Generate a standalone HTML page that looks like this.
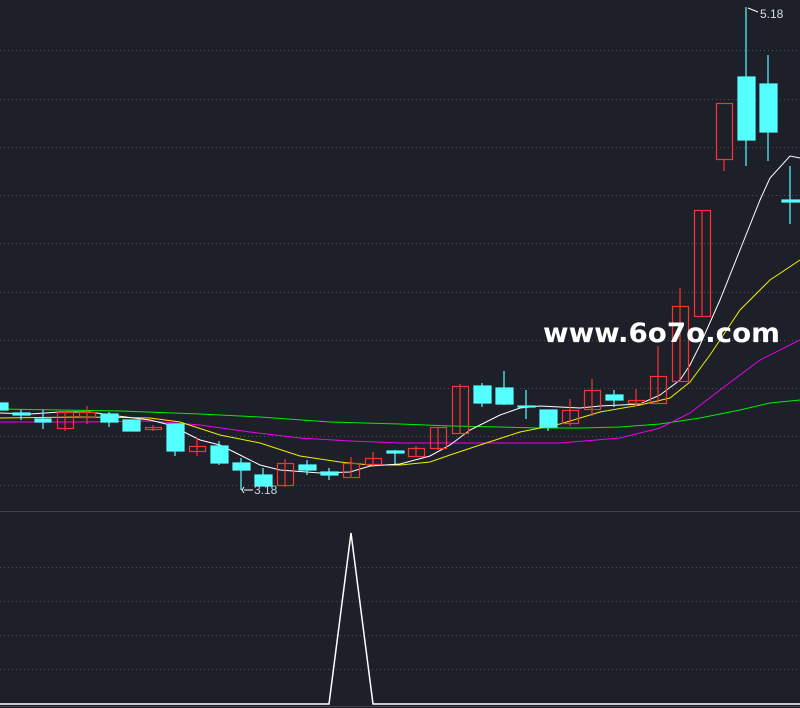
<!DOCTYPE html>
<html><head><meta charset="utf-8"><style>
html,body{margin:0;padding:0;background:#1d2029;}
svg{display:block}
</style></head><body>
<svg width="800" height="708" viewBox="0 0 800 708" xmlns="http://www.w3.org/2000/svg">
<rect width="800" height="708" fill="#1d2029"/>
<g stroke="#4a4e58" stroke-width="1" stroke-dasharray="1 3">
<line x1="0" y1="50.5" x2="800" y2="50.5"/>
<line x1="0" y1="99.5" x2="800" y2="99.5"/>
<line x1="0" y1="147.5" x2="800" y2="147.5"/>
<line x1="0" y1="195.5" x2="800" y2="195.5"/>
<line x1="0" y1="243.5" x2="800" y2="243.5"/>
<line x1="0" y1="292.5" x2="800" y2="292.5"/>
<line x1="0" y1="340.5" x2="800" y2="340.5"/>
<line x1="0" y1="388.5" x2="800" y2="388.5"/>
<line x1="0" y1="436.5" x2="800" y2="436.5"/>
<line x1="0" y1="485.5" x2="800" y2="485.5"/>
<line x1="0" y1="567.5" x2="800" y2="567.5"/>
<line x1="0" y1="601.5" x2="800" y2="601.5"/>
<line x1="0" y1="635.5" x2="800" y2="635.5"/>
<line x1="0" y1="669.5" x2="800" y2="669.5"/>
</g>
<line x1="0" y1="511.5" x2="800" y2="511.5" stroke="#3c404a"/>
<line x1="0" y1="706.5" x2="800" y2="706.5" stroke="#3c404a"/>
<!-- MA lines -->
<g fill="none" stroke-width="1">
<polyline stroke="#00ee00" points="0,409 60,410 120,411 200,414 260,417 330,422 400,424 450,426 500,427 540,428 580,428 620,427 660,424 700,418 740,410 770,403 800,400"/>
<polyline stroke="#ee00ee" points="0,422 80,422 150,421 200,425 250,432 300,438 350,441 400,443 450,443 500,443 560,443 620,438 660,428 690,413 720,390 760,360 800,340"/>
<polyline stroke="#eeee00" points="0,418 80,417 150,418 180,422 220,435 260,443 300,456 340,462 370,465 400,465 430,462 450,455 480,445 520,432 560,424 600,412 640,405 670,398 690,382 710,355 740,310 770,280 800,260"/>
<polyline stroke="#ffffff" points="0,413 30,414 60,412 90,412 110,415 150,420 170,425 200,440 220,445 240,455 260,465 280,470 320,473 350,472 370,466 400,464 430,456 450,445 470,430 500,415 520,408 540,406 560,407 580,408 600,406 640,404 660,395 680,380 690,365 700,345 720,300 740,250 760,200 770,178 790,156 800,158"/>
</g>
<!-- candles -->
<g stroke-width="1.2">
<g fill="#54ffff" stroke="#54ffff">
<rect x="0" y="403" width="8" height="7"/>
<line x1="21" y1="410" x2="21" y2="420"/><rect x="13" y="413" width="17" height="2"/>
<line x1="43" y1="410" x2="43" y2="429"/><rect x="35" y="419" width="16" height="3"/>
<line x1="109" y1="412" x2="109" y2="427"/><rect x="101" y="414" width="17" height="8"/>
<rect x="123" y="420" width="17" height="11"/>
<line x1="175" y1="424" x2="175" y2="456"/><rect x="167" y="424" width="17" height="27"/>
<line x1="219" y1="441" x2="219" y2="465"/><rect x="211" y="446" width="17" height="17"/>
<line x1="241" y1="458" x2="241" y2="490"/><rect x="233" y="463" width="17" height="7"/>
<line x1="263" y1="468" x2="263" y2="486"/><rect x="255" y="475" width="17" height="11"/>
<line x1="307" y1="460" x2="307" y2="475"/><rect x="299" y="465" width="17" height="5"/>
<line x1="329" y1="468" x2="329" y2="480"/><rect x="321" y="472" width="17" height="3"/>
<line x1="395" y1="450" x2="395" y2="464"/><rect x="387" y="451" width="17" height="2"/>
<line x1="482" y1="383" x2="482" y2="407"/><rect x="474" y="386" width="17" height="17"/>
<line x1="504" y1="371" x2="504" y2="405"/><rect x="496" y="388" width="17" height="16"/>
<line x1="526" y1="390" x2="526" y2="419"/><rect x="518" y="406" width="17" height="1"/>
<line x1="548" y1="427" x2="548" y2="431"/><rect x="540" y="410" width="17" height="17"/>
<line x1="614" y1="390" x2="614" y2="407"/><rect x="606" y="395" width="17" height="5"/>
<line x1="746" y1="7" x2="746" y2="166"/><rect x="738" y="77" width="17" height="63"/>
<line x1="768" y1="55" x2="768" y2="161"/><rect x="760" y="84" width="17" height="48"/>
<line x1="790" y1="166" x2="790" y2="224"/><rect x="782" y="200" width="18" height="2"/>
</g>
<g fill="none" stroke="#ff3232">
<line x1="65" y1="411" x2="65" y2="431"/><rect x="57.5" y="412.5" width="16" height="16"/>
<line x1="87" y1="406" x2="87" y2="424"/><rect x="79.5" y="412.5" width="16" height="5"/>
<line x1="153" y1="425" x2="153" y2="431"/><rect x="145.5" y="427.5" width="16" height="2"/>
<line x1="197" y1="438" x2="197" y2="456"/><rect x="189.5" y="446.5" width="16" height="5"/>
<line x1="285" y1="459" x2="285" y2="487"/><rect x="277.5" y="463.5" width="16" height="22"/>
<line x1="351" y1="457" x2="351" y2="478"/><rect x="343.5" y="463.5" width="16" height="14"/>
<line x1="373" y1="452" x2="373" y2="466"/><rect x="365.5" y="458.5" width="16" height="6"/>
<line x1="416" y1="446" x2="416" y2="457"/><rect x="408.5" y="448.5" width="16" height="8"/>
<line x1="438" y1="427" x2="438" y2="450"/><rect x="430.5" y="427.5" width="16" height="21"/>
<line x1="460" y1="384" x2="460" y2="434"/><rect x="452.5" y="386.5" width="16" height="47"/>
<line x1="570" y1="399" x2="570" y2="426"/><rect x="562.5" y="410.5" width="16" height="13"/>
<line x1="592" y1="379" x2="592" y2="416"/><rect x="584.5" y="390.5" width="16" height="19"/>
<line x1="636" y1="389" x2="636" y2="406"/><rect x="628.5" y="400.5" width="16" height="3"/>
<line x1="658" y1="346" x2="658" y2="403"/><rect x="650.5" y="376.5" width="16" height="27"/>
<line x1="680" y1="288" x2="680" y2="382"/><rect x="672.5" y="306.5" width="16" height="75"/>
<line x1="702" y1="210" x2="702" y2="317"/><rect x="694.5" y="210.5" width="16" height="106"/>
<line x1="724" y1="159" x2="724" y2="171"/><rect x="716.5" y="103.5" width="16" height="56"/>
</g>
</g>
<!-- labels -->
<polyline points="244,490 253,490" stroke="#ffffff" fill="none"/>
<polyline points="244,487 242,490 244,493" stroke="#ffffff" fill="none"/>
<text x="254" y="494" font-family="Liberation Sans, sans-serif" font-size="12" fill="#c8d0dc">3.18</text>
<polyline points="748,8 758,12" stroke="#ffffff" fill="none"/>
<text x="760" y="18" font-family="Liberation Sans, sans-serif" font-size="12" fill="#d8dce4">5.18</text>
<!-- watermark -->
<text x="543" y="342" textLength="237" lengthAdjust="spacingAndGlyphs" font-family="DejaVu Sans, sans-serif" font-weight="bold" font-size="27" fill="#ffffff">www.6o7o.com</text>
<!-- bottom indicator -->
<polyline points="0,704 329,704 351,533 373,704 800,704" fill="none" stroke="#ffffff" stroke-width="1.5"/>
</svg>
</body></html>
